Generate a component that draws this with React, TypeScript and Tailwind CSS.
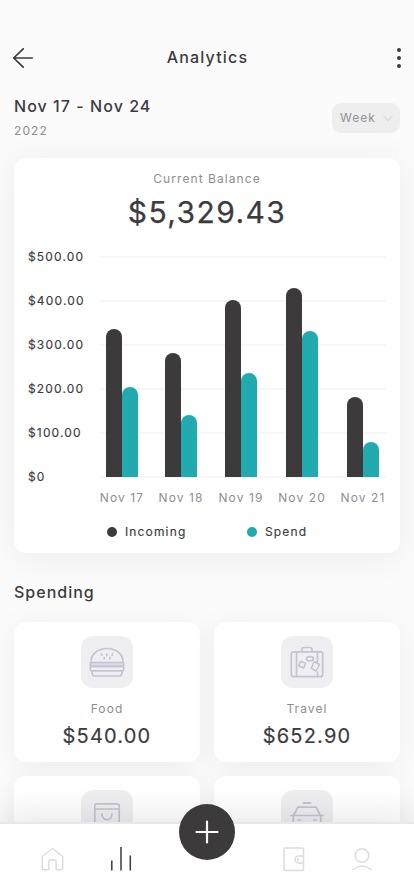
import type { ReactNode } from "react";

const days = [
  { label: "Nov 17", column: "w-[46px]", incoming: 148, spend: 90 },
  { label: "Nov 18", column: "w-[44px]", incoming: 124, spend: 62 },
  { label: "Nov 19", column: "w-[48px]", incoming: 177, spend: 104 },
  { label: "Nov 20", column: "w-[46px]", incoming: 189, spend: 146 },
  { label: "Nov 21", column: "w-[48px]", incoming: 80, spend: 35 },
];

const ticks = ["$500.00", "$400.00", "$300.00", "$200.00", "$100.00", "$0"];

function Header() {
  return (
    <header className="mt-[45px] grid h-6 shrink-0 grid-cols-[1fr_auto_1fr] items-center pl-3 pr-[10px]">
      <svg width="22" height="22" viewBox="0 0 22 22" fill="none" stroke="#3c3a3b" strokeWidth="1.7" strokeLinecap="round" strokeLinejoin="round">
        <path d="M20.2 12H1.7M11.2 2.800 1.700 12l9.500 9.100" />
      </svg>
      <h1 className="mr-px text-base font-medium leading-6 tracking-[1.15px]">Analytics</h1>
      <span className="flex w-[11px] flex-col items-center gap-1 justify-self-end pt-[2px]">
        <i className="size-1 rounded-full bg-[#3c3a3b]" />
        <i className="size-1 rounded-full bg-[#3c3a3b]" />
        <i className="size-1 rounded-full bg-[#3c3a3b]" />
      </span>
    </header>
  );
}

function Period() {
  return (
    <section className="mt-[26px] flex h-[63px] shrink-0 justify-between px-[14px]">
      <div>
        <p className="text-base font-medium leading-[22px] tracking-[1.05px]">Nov 17 - Nov 24</p>
        <p className="mt-[5px] text-xs leading-[18px] tracking-[1.1px] text-[#8e8e91]">2022</p>
      </div>
      <button className="mt-2 flex h-[30px] w-[68px] items-center justify-between rounded-[9px] bg-[#eeeeee] pl-2 pr-[7px] text-xs tracking-[1px] text-[#929295]">
        Week
        <svg width="10" height="7" viewBox="0 0 10 7" fill="none" stroke="#dadadc" strokeWidth="1.4" strokeLinecap="round" strokeLinejoin="round">
          <path d="m1 1.2 4 4.2 4-4.2" />
        </svg>
      </button>
    </section>
  );
}

function BalanceCard() {
  return (
    <section className="mx-[14px] flex h-[395px] shrink-0 flex-col rounded-xl bg-white px-[14px] pt-3 shadow-[0_4px_36px_rgba(0,0,0,0.065)]">
      <p className="text-center text-xs leading-[18px] tracking-[1.07px] text-[#8e8e91]">Current Balance</p>
      <p className="mt-1 text-center text-[30px] leading-[41px] tracking-[1.4px] [-webkit-text-stroke:0.25px_currentColor]">$5,329.43</p>
      <div className="mt-[14px] flex h-[240px]">
        <div className="w-[71px] text-xs tracking-[1.15px] [-webkit-text-stroke:0.15px_currentColor]">
          {ticks.map((tick) => (
            <p key={tick} className="h-11 leading-5">{tick}</p>
          ))}
        </div>
        <div className="relative mt-[9px] h-[222px] w-[287px]">
          {ticks.map((tick) => (
            <div key={tick} className="h-11">
              <div className="h-[2px] rounded-full bg-[#f7f7f8]" />
            </div>
          ))}
          <div className="absolute bottom-[1px] left-0 flex items-end gap-[14px]">
            {days.map((day) => (
              <div key={day.label} className={`flex items-end justify-center ${day.column}`}>
                <div className="w-4 rounded-t-lg bg-[#3c3a3b]" style={{ height: day.incoming }} />
                <div className="w-4 rounded-t-lg bg-[#22abae]" style={{ height: day.spend }} />
              </div>
            ))}
          </div>
        </div>
      </div>
      <div className="ml-[71px] mt-[2px] flex gap-[14px] text-xs leading-[18px] tracking-[1.1px] text-[#8e8e91]">
        {days.map((day) => (
          <span key={day.label} className={`flex shrink-0 justify-center whitespace-nowrap ${day.column}`}>
            {day.label}
          </span>
        ))}
      </div>
      <div className="mt-4 flex pl-[79px] text-xs leading-[18px] tracking-[1.15px] [-webkit-text-stroke:0.15px_currentColor]">
        <span className="flex w-[140px] items-center gap-2">
          <i className="size-[10px] rounded-full bg-[#3c3a3b]" />
          Incoming
        </span>
        <span className="flex items-center gap-2">
          <i className="size-[10px] rounded-full bg-[#22abae]" />
          Spend
        </span>
      </div>
    </section>
  );
}

function Glyph({ children }: { children: ReactNode }) {
  return (
    <svg width="52" height="52" viewBox="0 0 52 52" fill="none" stroke="#c4c3d3" strokeWidth="1.7" strokeLinecap="round" strokeLinejoin="round">
      {children}
    </svg>
  );
}

const food = (
  <Glyph>
    <path d="M10 26.5C9.5 18 17 12.5 26 12.5S42.500 18 42 26.5" />
    <rect x="9.300" y="26.500" width="33.400" height="3.800" rx="1.600" fill="#dcdce6" />
    <rect x="9.300" y="30.300" width="33.400" height="4.600" rx="1.600" />
    <path d="M10.500 34.900l1 3.700q.4 1.400 1.500 1.400h26q1.100 0 1.500-1.400l1-3.700" />
    <path d="m20.500 18 .5 1.300M25.800 18v1.300M31.500 18l-.5 1.300M23.200 21.500v1.200M28.800 21.500v1.200" />
  </Glyph>
);

const travel = (
  <Glyph>
    <rect x="10.300" y="15.800" width="31.400" height="24.800" rx="2" />
    <path d="M15.500 16v24.500M36.500 16v9.500M36.500 36v4.500M21 15.500v-2q0-2 2-2h6q2 0 2 2v2" />
    <ellipse cx="29" cy="22.800" rx="3.500" ry="2.200" />
    <path d="m19.600 25.300 4.900 1.800-1.800 4.900-4.900-2.300zM33.200 25.500l5.400 3-3.700 6.500-4.600-2.600z" strokeWidth="1.500" />
  </Glyph>
);

const shopping = (
  <Glyph>
    <path d="M13.800 42V16q0-2.200 2.200-2.200h20q2.200 0 2.200 2.200v26M14 19h24" />
    <path d="M21 24c0 7.500 10 7.500 10 0" />
  </Glyph>
);

const taxi = (
  <Glyph>
    <path d="M22.500 13h7" strokeWidth="2" />
    <path d="M13 24.500 17 17.200h18l4 7.300M10 25.500h32M12.300 26v13M39.700 26v13M17.200 30h2.600M32.800 30h2.600" />
  </Glyph>
);

function SpendingCard({ icon, name, amount }: { icon: ReactNode; name?: string; amount?: string }) {
  return (
    <article className="flex h-[140px] flex-col items-center rounded-xl bg-white pt-[14px] shadow-[0_4px_30px_rgba(0,0,0,0.055)]">
      <div className="size-[52px] rounded-xl bg-[#efeff1]">{icon}</div>
      {name && <p className="mt-3 text-xs leading-[18px] tracking-[1.1px] text-[#8e8e91]">{name}</p>}
      {amount && (
        <p className="mt-1 text-xl leading-7 tracking-[1.2px] [-webkit-text-stroke:0.2px_currentColor]">{amount}</p>
      )}
    </article>
  );
}

function Spending() {
  return (
    <section className="mt-[27px] shrink-0 px-[14px]">
      <h2 className="text-base font-medium leading-6 tracking-[1px]">Spending</h2>
      <div className="mt-[18px] grid grid-cols-2 gap-[14px]">
        <SpendingCard icon={food} name="Food" amount="$540.00" />
        <SpendingCard icon={travel} name="Travel" amount="$652.90" />
        <SpendingCard icon={shopping} />
        <SpendingCard icon={taxi} />
      </div>
    </section>
  );
}

function BottomBar() {
  return (
    <nav className="absolute inset-x-0 bottom-0 h-[74px] border-t-2 border-[#e8e8e8] bg-white shadow-[0_-6px_36px_rgba(0,0,0,0.1)]">
      <div className="flex justify-between px-10 pt-[23px] text-[#dcdce0]">
        <svg width="26" height="26" viewBox="0 0 26 26" fill="none" stroke="currentColor" strokeWidth="1.500" strokeLinejoin="round">
          <path d="M2.300 9.500 12.500 1.500l10.200 8v12.300q0 1-1 1h-4.600q-1 0-1-1V14q0-1-1-1h-5.200q-1 0-1 1v7.800q0 1-1 1H3.300q-1 0-1-1z" />
        </svg>
        <svg width="26" height="26" viewBox="0 0 26 26" fill="none" stroke="#3c3a3b" strokeWidth="1.500">
          <path d="M3.800 13.500V23.500M13 0V23.500M22.300 8.500V23.500" />
        </svg>
        <span className="w-[62px]" />
        <svg width="26" height="26" viewBox="0 0 26 26" fill="none" stroke="currentColor" strokeWidth="1.500" strokeLinejoin="round">
          <rect x="4" y="1" width="19.500" height="22.500" rx="1.500" />
          <path d="M23.500 9h-5a3.500 3.500 0 0 0 0 7h5" />
          <circle cx="18" cy="12.500" r=".5" />
        </svg>
        <svg width="26" height="26" viewBox="0 0 26 26" fill="none" stroke="currentColor" strokeWidth="1.500" strokeLinecap="round">
          <circle cx="14" cy="8.500" r="6.800" />
          <path d="M5 22.500q9-7 18 0" />
        </svg>
      </div>
      <button className="absolute -top-5 left-[179px] flex size-14 items-center justify-center rounded-full bg-[#3c3a3b]">
        <svg width="24" height="24" viewBox="0 0 24 24" stroke="white" strokeWidth="2.2" strokeLinecap="round">
          <path d="M12 1.500v21M1.500 12h21" />
        </svg>
      </button>
    </nav>
  );
}

export default function App() {
  return (
    <main className="relative flex h-[896px] w-[414px] flex-col overflow-hidden bg-[#fbfbfb] font-['Inter',sans-serif] text-[#3c3c3f]">
      <Header />
      <Period />
      <BalanceCard />
      <Spending />
      <BottomBar />
    </main>
  );
}
